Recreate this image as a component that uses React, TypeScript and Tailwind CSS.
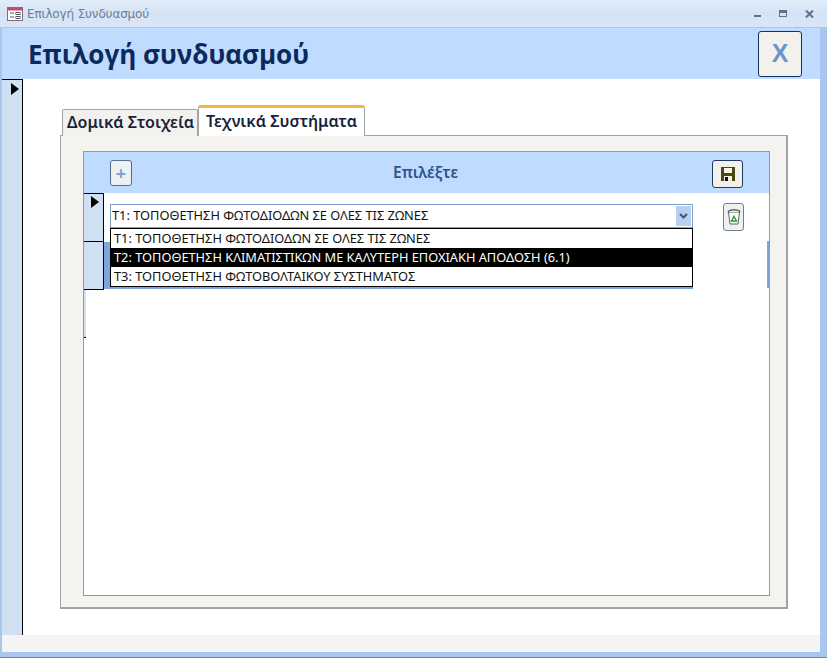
import React from "react";

const uiFont = "font-['Noto_Sans','Liberation_Sans',sans-serif]";

const Arrow = () => (
  <div className="w-0 h-0 border-y-[6px] border-y-transparent border-l-[8px] border-l-black" />
);

const options = [
  "Τ1: ΤΟΠΟΘΕΤΗΣΗ ΦΩΤΟΔΙΟΔΩΝ ΣΕ ΟΛΕΣ ΤΙΣ ΖΩΝΕΣ",
  "Τ2: ΤΟΠΟΘΕΤΗΣΗ ΚΛΙΜΑΤΙΣΤΙΚΩΝ ΜΕ ΚΑΛΥΤΕΡΗ ΕΠΟΧΙΑΚΗ ΑΠΟΔΟΣΗ (6.1)",
  "Τ3: ΤΟΠΟΘΕΤΗΣΗ ΦΩΤΟΒΟΛΤΑΙΚΟΥ ΣΥΣΤΗΜΑΤΟΣ",
];

const SaveIcon = () => (
  <svg width="16" height="16" viewBox="0 0 16 16">
    <path d="M1 1h14v14H1z" fill="#4a4616" />
    <path d="M4 2h8v5H4z" fill="#f6f4e2" />
    <path d="M4 10h8v5H4z" fill="#f6f4e2" />
    <path d="M5 11h3v4H5z" fill="#111" />
  </svg>
);

const BinIcon = () => (
  <svg width="14" height="18" viewBox="0 0 14 18">
    <path d="M1.5 4l1.5 12h8l1.5-12z" fill="#fff" stroke="#5b6b4a" strokeWidth="1" />
    <path d="M1 4c1-3 11-3 12 0" fill="#e6e6e6" stroke="#333" strokeWidth="1.2" />
    <path d="M7 8.5l2.5 4.5h-5z" fill="none" stroke="#1f9d3a" strokeWidth="1.4" />
  </svg>
);

export default function App() {
  return (
    <div className={`w-[827px] h-[658px] flex flex-col bg-[#a9c6ee] overflow-hidden ${uiFont}`}>
      {/* title bar */}
      <div className="h-[28px] flex items-center pl-[7px] pr-[13px] border-b border-[#a9c6ee] bg-gradient-to-b from-[#e3eefb] via-[#d5e3f5] to-[#dbe7f7]">
        <svg width="16" height="14" viewBox="0 0 16 14">
          <rect x="0.5" y="0.5" width="15" height="13" fill="#fff" stroke="#7d6a8c" />
          <rect x="1" y="1" width="14" height="2.5" fill="#c4476a" />
          <path d="M3 6h4M3 10h4" stroke="#555" />
          <rect x="9" y="5.5" width="4" height="2" fill="none" stroke="#555" />
          <rect x="9" y="9.5" width="4" height="2" fill="none" stroke="#555" />
        </svg>
        <span className="ml-[4px] text-[12px] text-[#6d7f95] font-['DejaVu_Sans',sans-serif] tracking-[-0.15px]">Επιλογή Συνδυασμού</span>
        <div className="ml-auto flex items-center gap-[18px] text-[#5f7189]">
          <div className="w-[7px] h-[2px] mt-[5px] bg-[#5f7189]" />
          <div className="w-[8px] h-[7px] border border-[#5f7189] border-t-[3px]" />
          <svg width="9" height="8" viewBox="0 0 9 8">
            <path d="M1 0.5l7 7M8 0.5l-7 7" stroke="#5f7189" strokeWidth="2" />
          </svg>
        </div>
      </div>

      <div className="flex-1 mx-[2px] mr-[7px] flex flex-col">
        {/* form header */}
        <div className="h-[51px] shrink-0 bg-[#bfdbff] flex items-start justify-between pl-[26px] pr-[18px] pt-[3px]">
          <h1 className="mt-[5px] text-[26px] leading-[36px] font-bold text-[#0b2a5b] font-['Open_Sans',sans-serif]">Επιλογή συνδυασμού</h1>
          <button className="w-[44px] h-[46px] rounded-[3px] border border-[#15315c] bg-[#f3f1ec] text-[#6a93d1] text-[25px] font-bold font-['Liberation_Sans',sans-serif]">X</button>
        </div>

        <div className="flex-1 flex bg-white">
          {/* record selector */}
          <div className="w-[21px] shrink-0 bg-[#cfe0f3] border-r border-black border-t pl-[9px] pt-[3px]">
            <Arrow />
          </div>

          {/* tab control */}
          <div className="flex-1 pl-[37px] pr-[32px] pt-[26px] pb-[26px] flex flex-col">
            <div className="flex items-end h-[31px] -mb-px pl-[2px] relative z-10">
              <div className="h-[27px] w-[136px] pl-[1px] border border-b-0 border-[#a3a3a3] rounded-t-[2px] bg-[#f2f1ed] text-center text-[16px] leading-[25px] font-semibold text-[#16233a]">Δομικά Στοιχεία</div>
              <div className="h-[31px] w-[167px] border-x border-[#a3a3a3] border-t-[3px] border-t-[#f0b640] rounded-t-[3px] bg-white text-center text-[16px] leading-[27px] font-semibold text-[#16233a]">Τεχνικά Συστήματα</div>
            </div>
            <div className="flex-1 border border-[#a3a3a3] border-r-2 border-b-2 bg-[#f4f3ef] pl-[22px] pr-[16px] pt-[15px] pb-[11px] flex">
              {/* subform */}
              <div className="flex-1 border border-[#7ba0c4] bg-white flex flex-col relative">
                <div className="h-[41px] shrink-0 bg-[#bfdbff] relative flex items-center justify-center">
                  <button className="absolute left-[26px] top-[8px] w-[22px] h-[26px] rounded-[3px] border border-[#4f6f98] bg-[#eef1f3] text-[#7ea3cc] text-[18px] leading-[22px] font-bold">+</button>
                  <span className="pr-[2px] text-[15.5px] font-semibold text-[#2f5489]">Επιλέξτε</span>
                  <button className="absolute right-[26px] top-[8px] w-[31px] h-[28px] rounded-[3px] border border-[#1f3a60] bg-[#f3f1ec] flex items-center justify-center"><SaveIcon /></button>
                </div>

                <div className="flex-1 flex flex-col">
                  <div className="h-[48px] flex">
                    <div className="w-[20px] shrink-0 bg-[#cfe0f3] border-r border-t border-black pl-[7px] pt-[2px]">
                      <Arrow />
                    </div>
                  </div>
                  <div className="h-[49px] flex border-t border-black w-[20px] overflow-visible">
                    <div className="w-[20px] shrink-0 bg-[#cfe0f3] border-r border-b border-black" />
                    <div className="w-[589px] h-[47px] shrink-0 bg-[#7ea6dc]" />
                  </div>
                  <div className="h-[47px] w-[2px] bg-[#cfe0f3]" />
                  <div className="w-[2px] h-px bg-black" />
                </div>

                {/* right edge accent next to the list */}
                <div className="absolute right-0 top-[89px] w-[2px] h-[47px] bg-[#7ea6dc]" />

                {/* combo box with the list dropped open */}
                <div className="absolute left-[26px] top-[52px] w-[583px]">
                  <div className="h-[24px] border border-[#7ba0c4] bg-white flex items-center pl-[1px] text-[12.8px] text-[#111]">
                    <span className="flex-1">{options[0]}</span>
                    <div className="w-[15px] h-[20px] mr-[1px] bg-[#b9cff0] flex items-center justify-center">
                      <svg width="9" height="7" viewBox="0 0 9 7">
                        <path d="M1 1l3.5 3.5L8 1" fill="none" stroke="#3d5580" strokeWidth="2" />
                      </svg>
                    </div>
                  </div>
                  <div className="border border-black bg-white text-[12.8px] leading-[19px] text-[#111]">
                    {options.map((o, i) => (
                      <div key={o} className={`pl-[3px] h-[19px] ${i === 1 ? "bg-black text-white" : ""}`}>{o}</div>
                    ))}
                  </div>
                </div>

                <button className="absolute left-[639px] top-[51px] w-[21px] h-[28px] rounded-[3px] border border-[#6f7f90] bg-[#eef1f3] flex items-center justify-center"><BinIcon /></button>
              </div>
            </div>
          </div>
        </div>

        {/* form footer */}
        <div className="h-[17px] shrink-0 bg-[#f4f4f4]" />
      </div>
      <div className="h-[6px] shrink-0 bg-[#a9c6ee] border-b border-[#5d86bb]" />
    </div>
  );
}
